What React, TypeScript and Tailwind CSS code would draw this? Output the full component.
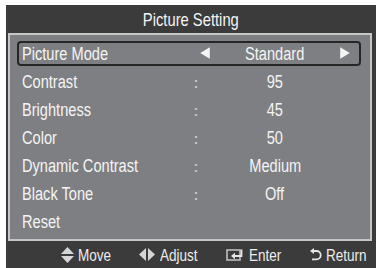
import React from "react";

const rows = [
  { label: "Picture Mode", value: "Standard", selected: true },
  { label: "Contrast", value: "95" },
  { label: "Brightness", value: "45" },
  { label: "Color", value: "50" },
  { label: "Dynamic Contrast", value: "Medium" },
  { label: "Black Tone", value: "Off" },
  { label: "Reset", value: "", noColon: true },
];

function TriLeft() {
  return (
    <svg width="10" height="12" viewBox="0 0 10 12">
      <polygon points="9.8,0.2 9.8,11.8 0.2,6" fill="#f4f4f4" />
    </svg>
  );
}
function TriRight() {
  return (
    <svg width="10" height="12" viewBox="0 0 10 12">
      <polygon points="0.2,0.2 0.2,11.8 9.8,6" fill="#f4f4f4" />
    </svg>
  );
}

function MoveIcon() {
  return (
    <svg width="13" height="16" viewBox="0 0 13 16">
      <polygon points="6.5,0 13,7 0,7" fill="#d6d6d6" />
      <polygon points="0,9 13,9 6.5,16" fill="#d6d6d6" />
    </svg>
  );
}
function AdjustIcon() {
  return (
    <svg width="16" height="13" viewBox="0 0 16 13">
      <polygon points="7,0 7,13 0,6.5" fill="#d6d6d6" />
      <polygon points="9,0 9,13 16,6.5" fill="#d6d6d6" />
    </svg>
  );
}
function EnterIcon() {
  return (
    <svg width="18" height="12" viewBox="0 0 18 12">
      <rect x="1" y="1" width="13" height="10" fill="none" stroke="#bdbdbd" strokeWidth="1.6" />
      <path d="M15.5 0.5 V7 H8" fill="none" stroke="#e6e6e6" strokeWidth="1.8" />
      <polygon points="5,7 9,3.8 9,10.2" fill="#e6e6e6" />
    </svg>
  );
}
function ReturnIcon() {
  return (
    <svg width="12" height="13" viewBox="0 0 12 13">
      <path d="M3.5 3 H6.5 A4.2 4.2 0 0 1 6.5 11.4 H2" fill="none" stroke="#e6e6e6" strokeWidth="1.8" />
      <polygon points="0,3 4,0 4,6" fill="#e6e6e6" />
    </svg>
  );
}

function FootItem({ icon, text, w, gap }: { icon: React.ReactNode; text: string; w: string; gap: string }) {
  return (
    <div className={"flex items-center " + gap}>
      {icon}
      <span className={"inline-block whitespace-nowrap origin-left scale-x-[0.83] " + w}>{text}</span>
    </div>
  );
}

export default function App() {
  return (
    <div
      className="w-[376px] h-[268px] bg-white pl-[6px] pt-[5px] overflow-hidden"
      style={{ fontFamily: '"Liberation Sans", Arial, sans-serif' }}
    >
      <div className="w-[370px] h-[263px] bg-[#3b3b3b] flex flex-col">
        <div className="h-[28px] flex items-center justify-center pt-[4px] text-[17.8px] text-[#f4f4f4] leading-none">
          <span className="inline-block whitespace-nowrap origin-center scale-x-[0.83]">Picture Setting</span>
        </div>
        <div className="ml-[2px] mr-[4px] h-[208px] border-2 border-[#c6c6c6] bg-[#7e7f83] pl-[6.5px] pr-[9px] pt-[4px]">
          {rows.map((r) => (
            <div key={r.label} className="h-[28px] flex items-center">
              <div
                className={
                  "h-[25px] w-full flex items-center border-2 rounded-[4px] pl-[3.5px] pt-[3px] text-[17.6px] leading-none text-[#f4f4f4] " +
                  (r.selected ? "border-[#262626]" : "border-transparent")
                }
              >
                <div className="w-[170px] whitespace-nowrap">
                  <span className="inline-block origin-left scale-x-[0.83]">{r.label}</span>
                </div>
                <div className="w-[8px] text-center text-[#c4c4c4] text-[15px] font-bold">
                  {r.selected || r.noColon ? "" : ":"}
                </div>
                <div className="w-[150px] flex items-center justify-between">
                  {r.selected ? <span className="-mt-[3px] flex"><TriLeft /></span> : <span />}
                  <span className="flex-1 text-center whitespace-nowrap">
                    <span className="inline-block origin-center scale-x-[0.83]">{r.value}</span>
                  </span>
                  {r.selected ? <span className="-mt-[3px] flex"><TriRight /></span> : <span />}
                </div>
              </div>
            </div>
          ))}
        </div>
        <div className="flex-1 flex items-center justify-end pr-[9px] pt-[1px] gap-[28px] text-[16.3px] leading-none text-[#ececec]">
          <FootItem icon={<MoveIcon />} text="Move" w="w-[33px]" gap="gap-[4px]" />
          <FootItem icon={<AdjustIcon />} text="Adjust" w="w-[38px]" gap="gap-[5px]" />
          <FootItem icon={<EnterIcon />} text="Enter" w="w-[33px]" gap="gap-[5px]" />
          <FootItem icon={<ReturnIcon />} text="Return" w="w-[41px]" gap="gap-[4px]" />
        </div>
      </div>
    </div>
  );
}
